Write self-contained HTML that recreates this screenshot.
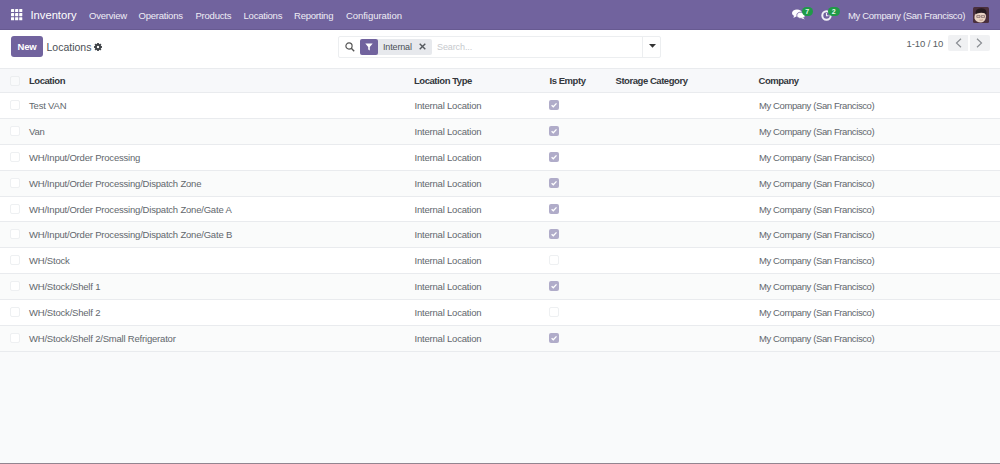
<!DOCTYPE html>
<html><head><meta charset="utf-8">
<style>
*{box-sizing:border-box;margin:0;padding:0}
html,body{width:1000px;height:464px;overflow:hidden;background:#f9fafb;font-family:"Liberation Sans",sans-serif;position:relative}
.a{position:absolute;white-space:nowrap}
#nav{position:absolute;left:0;top:0;width:1000px;height:30px;background:#71639e;border-bottom:1px solid #675a91}
.nt{position:absolute;color:#efedf5;font-size:9.5px;letter-spacing:-0.22px;line-height:10px;top:11px;white-space:nowrap}
#cp{position:absolute;left:0;top:30px;width:1000px;height:39px;background:#fff}
.row{position:absolute;left:0;width:1000px;height:26px;border-top:1px solid #e9ebee}
.c{position:absolute;font-size:9.5px;letter-spacing:-0.2px;color:#62676d;line-height:10px;white-space:nowrap}
.hdr .c{font-weight:bold;color:#33373c;letter-spacing:-0.45px}
.cb{position:absolute;left:10px;width:10px;height:10px;border:1px solid #eef0f2;border-radius:2px;background:#fff}
.chk{position:absolute;left:549px;width:10px;height:10px;border-radius:2px;background:#b0acc9}
.chk svg{position:absolute;left:0;top:0}
.ucb{position:absolute;left:549px;width:10px;height:10px;border:1px solid #eef0f2;border-radius:2px}
</style></head><body>

<div id="nav">
  <svg class="a" style="left:11px;top:9px" width="12" height="12" viewBox="0 0 12 12" fill="#fff"><rect x="0" y="0" width="3.1" height="3.1" rx="0.4"/><rect x="4.1" y="0" width="3.1" height="3.1" rx="0.4"/><rect x="8.2" y="0" width="3.1" height="3.1" rx="0.4"/><rect x="0" y="4.1" width="3.1" height="3.1" rx="0.4"/><rect x="4.1" y="4.1" width="3.1" height="3.1" rx="0.4"/><rect x="8.2" y="4.1" width="3.1" height="3.1" rx="0.4"/><rect x="0" y="8.2" width="3.1" height="3.1" rx="0.4"/><rect x="4.1" y="8.2" width="3.1" height="3.1" rx="0.4"/><rect x="8.2" y="8.2" width="3.1" height="3.1" rx="0.4"/></svg>
  <div class="nt" style="left:30.5px;font-size:11.2px;letter-spacing:0;top:9px;line-height:12px;color:#fff">Inventory</div>
  <div class="nt" style="left:89px">Overview</div>
  <div class="nt" style="left:138.5px">Operations</div>
  <div class="nt" style="left:195.5px">Products</div>
  <div class="nt" style="left:243.5px">Locations</div>
  <div class="nt" style="left:294px">Reporting</div>
  <div class="nt" style="left:346px;letter-spacing:-0.05px">Configuration</div>
  <!-- chat icon -->
  <svg class="a" style="left:792px;top:9px" width="14" height="11" viewBox="0 0 14 11">
    <ellipse cx="5" cy="4" rx="5" ry="3.6" fill="#fff"/>
    <path d="M2 6.5 L1.5 9 L4.5 7.2Z" fill="#fff"/>
    <ellipse cx="9" cy="6.3" rx="4.2" ry="3.1" fill="#fff" stroke="#71639e" stroke-width="0.8"/>
    <path d="M11 8.5 L12.8 10.6 L9.5 9.2Z" fill="#fff"/>
  </svg>
  <div class="a" style="left:801.5px;top:7px;width:11.5px;height:9px;border-radius:4.5px;background:#1f9a48;color:#e9f7ec;font-size:7px;line-height:9px;text-align:center;font-weight:bold">7</div>
  <!-- activity clock -->
  <svg class="a" style="left:821px;top:10px" width="11" height="11" viewBox="0 0 11 11">
    <circle cx="5.5" cy="5.5" r="4.2" fill="none" stroke="#f1eff7" stroke-width="2"/>
    <path d="M5.5 3 V5.8 H7.5" fill="none" stroke="#f1eff7" stroke-width="1.1"/>
  </svg>
  <div class="a" style="left:828px;top:7px;width:11.5px;height:9px;border-radius:4.5px;background:#1f9a48;color:#e9f7ec;font-size:7px;line-height:9px;text-align:center;font-weight:bold">2</div>
  <div class="nt" style="left:848px;letter-spacing:-0.33px">My Company (San Francisco)</div>
  <!-- avatar -->
  <svg class="a" style="left:973px;top:7px" width="16" height="16" viewBox="0 0 16 16">
    <rect width="16" height="16" rx="1.5" fill="#4a2f3d"/>
    <path d="M1.5 9.5 Q1.5 5 7.5 5 Q13 5 13 9.5 Q12.5 15 8 15.5 Q3 15.5 1.5 11.5Z" fill="#e9d3c3"/>
    <path d="M2.5 7.5 Q2 1 8.5 1.2 Q14.5 1.5 13.5 8 L12 6.2 Q8 5 4 6.5Z" fill="#261a20"/>
    <path d="M3.8 8.6 H7 V10.4 H3.8Z M8.3 8.6 H11.5 V10.4 H8.3Z" fill="none" stroke="#5a4048" stroke-width="0.55"/>
    <path d="M6.5 13 Q8.3 13.5 10 12.8" stroke="#a07060" stroke-width="0.6" fill="none"/>
  </svg>
</div>


<div id="cp">
  <div class="a" style="left:11px;top:6px;width:32px;height:21px;background:#71639e;border-radius:3px"></div>
  <div class="a" style="left:17.5px;top:12px;color:#fff;font-weight:bold;font-size:9.5px;letter-spacing:-0.2px;line-height:10px">New</div>
  <div class="a" style="left:46.5px;top:11px;font-size:10.5px;color:#4b5056;line-height:12px">Locations</div>
  <svg class="a" style="left:94px;top:13px" width="8" height="8" viewBox="0 0 8 8">
    <g fill="#3d4146"><circle cx="4" cy="4" r="2.9"/>
    <rect x="3.1" y="0" width="1.8" height="8"/><rect x="0" y="3.1" width="8" height="1.8"/>
    <rect x="3.1" y="0" width="1.8" height="8" transform="rotate(45 4 4)"/><rect x="3.1" y="0" width="1.8" height="8" transform="rotate(-45 4 4)"/></g>
    <circle cx="4" cy="4" r="1.2" fill="#fff"/>
  </svg>
  <!-- search -->
  <div class="a" style="left:338px;top:6px;width:323px;height:22px;border:1px solid #eceef0;border-radius:2px;background:#fff"></div>
  <div class="a" style="left:642px;top:7px;width:1px;height:20px;background:#eceef0"></div>
  <svg class="a" style="left:345px;top:12px" width="10" height="10" viewBox="0 0 10 10">
    <circle cx="4" cy="4" r="3.1" fill="none" stroke="#555" stroke-width="1.2"/>
    <path d="M6.3 6.3 L9.2 9.2" stroke="#555" stroke-width="1.4"/>
  </svg>
  <div class="a" style="left:377px;top:9px;width:55px;height:16px;background:#e7e9ed;border-radius:0 2px 2px 0"></div>
  <div class="a" style="left:360px;top:9px;width:18px;height:16px;background:#71639e;border-radius:2px"></div>
  <svg class="a" style="left:365px;top:13px" width="8" height="8" viewBox="0 0 8 8">
    <path d="M0.3 0.5 H7.7 L4.8 4 V7.5 L3.2 6.5 V4Z" fill="#fff"/>
  </svg>
  <div class="a" style="left:383px;top:12px;font-size:9px;letter-spacing:-0.15px;line-height:10px;color:#4b5056">Internal</div>
  <svg class="a" style="left:418.5px;top:12.5px" width="7" height="7" viewBox="0 0 7 7">
    <path d="M0.7 0.7 L6.3 6.3 M6.3 0.7 L0.7 6.3" stroke="#55595e" stroke-width="1.4"/>
  </svg>
  <div class="a" style="left:437px;top:12px;font-size:9px;letter-spacing:-0.1px;line-height:10px;color:#c6c9cd">Search...</div>
  <svg class="a" style="left:648.5px;top:14px" width="7" height="4" viewBox="0 0 7 4">
    <path d="M0 0 H7 L3.5 3.8Z" fill="#333"/>
  </svg>
  <!-- pager -->
  <div class="a" style="left:906.5px;top:8.5px;font-size:9.5px;letter-spacing:-0.1px;color:#595e64;line-height:10px">1-10 / 10</div>
  <div class="a" style="left:948px;top:5px;width:20px;height:16px;background:#f0f1f3;border-radius:2px 0 0 2px"></div>
  <div class="a" style="left:969.5px;top:5px;width:20px;height:16px;background:#f0f1f3;border-radius:0 2px 2px 0"></div>
  <svg class="a" style="left:955px;top:8px" width="7" height="10" viewBox="0 0 7 10">
    <path d="M6 0.8 L1.5 5 L6 9.2" fill="none" stroke="#8a8e93" stroke-width="1.2"/>
  </svg>
  <svg class="a" style="left:976px;top:8px" width="7" height="10" viewBox="0 0 7 10">
    <path d="M1 0.8 L5.5 5 L1 9.2" fill="none" stroke="#8a8e93" stroke-width="1.2"/>
  </svg>
</div>

<div class="row hdr" style="top:68px;height:24px;background:#f7f8fa">
  <div class="cb" style="top:7px;border-color:#eceef0;background:#f9fafb"></div>
  <div class="c" style="left:29px;top:6.5px">Location</div>
  <div class="c" style="left:414px;top:6.5px">Location Type</div>
  <div class="c" style="left:549.5px;top:6.5px">Is Empty</div>
  <div class="c" style="left:615.5px;top:6.5px">Storage Category</div>
  <div class="c" style="left:758.5px;top:6.5px">Company</div>
</div><div class="row" style="top:92px;background:#fff;">
  <div class="cb" style="top:6.5px"></div>
  <div class="c" style="left:29px;top:8px">Test VAN</div>
  <div class="c" style="left:414.5px;top:8px">Internal Location</div>
  <div class="chk" style="top:6.5px"><svg width="10" height="10" viewBox="0 0 10 10"><path d="M2.6 5.2 L4.3 6.8 L7.5 3.4" stroke="#fff" stroke-width="1.3" fill="none"/></svg></div>
  <div class="c" style="left:759px;top:8px;letter-spacing:-0.4px">My Company (San Francisco)</div>
</div><div class="row" style="top:118px;background:#fafbfb;">
  <div class="cb" style="top:6.5px"></div>
  <div class="c" style="left:29px;top:8px">Van</div>
  <div class="c" style="left:414.5px;top:8px">Internal Location</div>
  <div class="chk" style="top:6.5px"><svg width="10" height="10" viewBox="0 0 10 10"><path d="M2.6 5.2 L4.3 6.8 L7.5 3.4" stroke="#fff" stroke-width="1.3" fill="none"/></svg></div>
  <div class="c" style="left:759px;top:8px;letter-spacing:-0.4px">My Company (San Francisco)</div>
</div><div class="row" style="top:144px;background:#fff;">
  <div class="cb" style="top:6.5px"></div>
  <div class="c" style="left:29px;top:8px">WH/Input/Order Processing</div>
  <div class="c" style="left:414.5px;top:8px">Internal Location</div>
  <div class="chk" style="top:6.5px"><svg width="10" height="10" viewBox="0 0 10 10"><path d="M2.6 5.2 L4.3 6.8 L7.5 3.4" stroke="#fff" stroke-width="1.3" fill="none"/></svg></div>
  <div class="c" style="left:759px;top:8px;letter-spacing:-0.4px">My Company (San Francisco)</div>
</div><div class="row" style="top:170px;background:#fafbfb;">
  <div class="cb" style="top:6.5px"></div>
  <div class="c" style="left:29px;top:8px">WH/Input/Order Processing/Dispatch Zone</div>
  <div class="c" style="left:414.5px;top:8px">Internal Location</div>
  <div class="chk" style="top:6.5px"><svg width="10" height="10" viewBox="0 0 10 10"><path d="M2.6 5.2 L4.3 6.8 L7.5 3.4" stroke="#fff" stroke-width="1.3" fill="none"/></svg></div>
  <div class="c" style="left:759px;top:8px;letter-spacing:-0.4px">My Company (San Francisco)</div>
</div><div class="row" style="top:196px;background:#fff;">
  <div class="cb" style="top:6.5px"></div>
  <div class="c" style="left:29px;top:8px">WH/Input/Order Processing/Dispatch Zone/Gate A</div>
  <div class="c" style="left:414.5px;top:8px">Internal Location</div>
  <div class="chk" style="top:6.5px"><svg width="10" height="10" viewBox="0 0 10 10"><path d="M2.6 5.2 L4.3 6.8 L7.5 3.4" stroke="#fff" stroke-width="1.3" fill="none"/></svg></div>
  <div class="c" style="left:759px;top:8px;letter-spacing:-0.4px">My Company (San Francisco)</div>
</div><div class="row" style="top:221px;background:#fafbfb;">
  <div class="cb" style="top:6.5px"></div>
  <div class="c" style="left:29px;top:8px">WH/Input/Order Processing/Dispatch Zone/Gate B</div>
  <div class="c" style="left:414.5px;top:8px">Internal Location</div>
  <div class="chk" style="top:6.5px"><svg width="10" height="10" viewBox="0 0 10 10"><path d="M2.6 5.2 L4.3 6.8 L7.5 3.4" stroke="#fff" stroke-width="1.3" fill="none"/></svg></div>
  <div class="c" style="left:759px;top:8px;letter-spacing:-0.4px">My Company (San Francisco)</div>
</div><div class="row" style="top:247px;background:#fff;">
  <div class="cb" style="top:6.5px"></div>
  <div class="c" style="left:29px;top:8px">WH/Stock</div>
  <div class="c" style="left:414.5px;top:8px">Internal Location</div>
  <div class="ucb" style="top:6.5px"></div>
  <div class="c" style="left:759px;top:8px;letter-spacing:-0.4px">My Company (San Francisco)</div>
</div><div class="row" style="top:273px;background:#fafbfb;">
  <div class="cb" style="top:6.5px"></div>
  <div class="c" style="left:29px;top:8px">WH/Stock/Shelf 1</div>
  <div class="c" style="left:414.5px;top:8px">Internal Location</div>
  <div class="chk" style="top:6.5px"><svg width="10" height="10" viewBox="0 0 10 10"><path d="M2.6 5.2 L4.3 6.8 L7.5 3.4" stroke="#fff" stroke-width="1.3" fill="none"/></svg></div>
  <div class="c" style="left:759px;top:8px;letter-spacing:-0.4px">My Company (San Francisco)</div>
</div><div class="row" style="top:299px;background:#fff;">
  <div class="cb" style="top:6.5px"></div>
  <div class="c" style="left:29px;top:8px">WH/Stock/Shelf 2</div>
  <div class="c" style="left:414.5px;top:8px">Internal Location</div>
  <div class="ucb" style="top:6.5px"></div>
  <div class="c" style="left:759px;top:8px;letter-spacing:-0.4px">My Company (San Francisco)</div>
</div><div class="row" style="top:325px;background:#fafbfb;">
  <div class="cb" style="top:6.5px"></div>
  <div class="c" style="left:29px;top:8px">WH/Stock/Shelf 2/Small Refrigerator</div>
  <div class="c" style="left:414.5px;top:8px">Internal Location</div>
  <div class="chk" style="top:6.5px"><svg width="10" height="10" viewBox="0 0 10 10"><path d="M2.6 5.2 L4.3 6.8 L7.5 3.4" stroke="#fff" stroke-width="1.3" fill="none"/></svg></div>
  <div class="c" style="left:759px;top:8px;letter-spacing:-0.4px">My Company (San Francisco)</div>
</div><div class="row" style="top:351px;height:1px"></div>
<div class="a" style="left:0;top:463px;width:1000px;height:1px;background:#928590"></div>
</body></html>
